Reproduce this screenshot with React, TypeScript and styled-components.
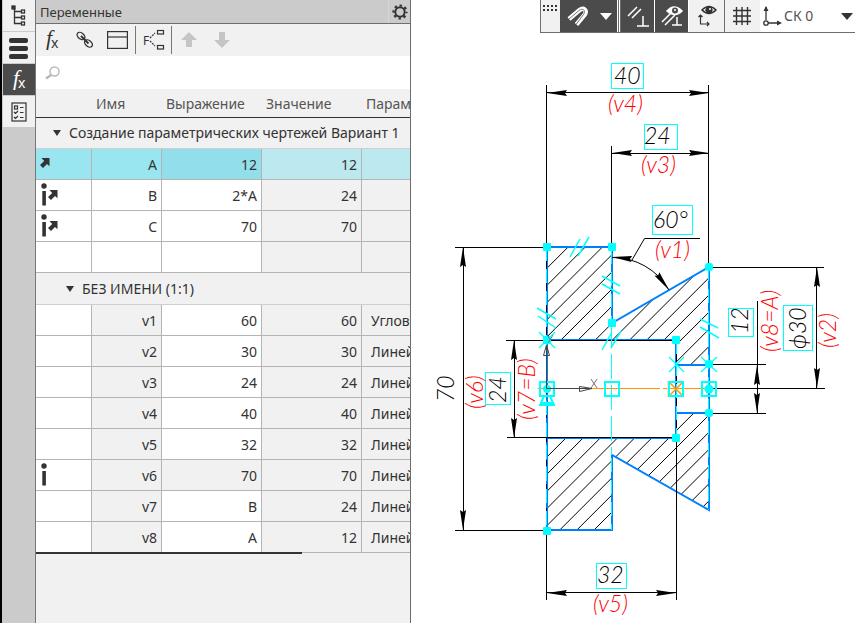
import React from "react";
import styled, { createGlobalStyle, css } from "styled-components";

const ink = "#333333";
const grey = "#cbcbcb";
const light = "#f1f1f1";
const cyan = "#00ffff";
const blue = "#0080ff";
const orange = "#ff9800";

const GlobalStyle = createGlobalStyle`
  * { box-sizing: border-box; }
  body { margin: 0; background: #fff; color: ${ink}; font: 14px/20px "Noto Sans", "Open Sans", sans-serif; }
  button, input, select { font: inherit; color: inherit; }
  svg { display: block; flex: none; }
`;

const Page = styled.div`
  display: grid;
  grid-template-columns: 36px minmax(0, 375fr) minmax(0, 444fr);
  min-height: 100vh;
`;

const Rail = styled.nav`
  display: flex;
  flex-direction: column;
  gap: 1px;
  background: ${grey};
  border-left: 2px solid #000;
  border-right: 1px solid #777;
  padding-left: 1px;
`;

const RailButton = styled.button<{ $active?: boolean }>`
  display: flex;
  align-items: center;
  justify-content: center;
  height: 31px;
  padding: 0;
  border: 0;
  background: ${(p) => (p.$active ? "#4b4b4b" : light)};
  color: ${(p) => (p.$active ? "#fff" : ink)};
`;

const Panel = styled.section`
  display: flex;
  flex-direction: column;
  background: ${light};
  border-right: 1px solid #6e6e6e;
  overflow: hidden;
`;

const TitleBar = styled.header`
  display: flex;
  align-items: center;
  justify-content: space-between;
  height: 24px;
  padding-left: 4px;
  background: ${grey};
  border-bottom: 1px solid #6e6e6e;
`;

const Title = styled.h1`
  margin: 0;
  font-size: 13px;
  line-height: 20px;
  font-weight: 400;
`;

const GearButton = styled.button`
  display: flex;
  align-items: center;
  justify-content: center;
  width: 22px;
  height: 23px;
  padding: 0;
  border: 0;
  border-left: 1px solid #d6d6d6;
  background: none;
`;

const Tools = styled.div`
  display: flex;
  align-items: center;
  height: 32px;
`;

const ToolButton = styled.button<{ $w?: number }>`
  display: flex;
  align-items: center;
  justify-content: center;
  width: ${(p) => p.$w ?? 33}px;
  height: 28px;
  padding: 0;
  border: 0;
  background: none;
  color: ${ink};
  &:disabled { color: #c5c5c5; }
`;

const Divider = styled.span`
  width: 1px;
  height: 28px;
  margin: 0 1px;
  background: #777;
`;

const Search = styled.label`
  display: flex;
  align-items: center;
  gap: 8px;
  height: 33px;
  padding-left: 9px;
  background: #fff;
`;

const SearchInput = styled.input`
  flex: 1;
  min-width: 0;
  border: 0;
  outline: 0;
  background: none;
`;

const Grid = styled.table`
  width: 100%;
  table-layout: fixed;
  border-collapse: separate;
  border-spacing: 0;
  white-space: nowrap;
`;

const Col = styled.col<{ $w?: number }>`
  width: ${(p) => (p.$w ? `${p.$w}px` : "auto")};
`;

const Head = styled.th`
  height: 29px;
  padding: 2px 0 0 4px;
  border-bottom: 1px solid ${ink};
  text-align: left;
  font-weight: 400;
  color: #555;
  overflow: hidden;
`;

const Group = styled.th<{ $indent: number }>`
  height: ${(p) => (p.$indent > 20 ? 32 : 31)}px;
  padding: 0 0 0 ${(p) => p.$indent}px;
  border-bottom: 1px solid #cfcfcf;
  text-align: left;
  font-weight: 400;
  overflow: hidden;
`;

const GroupToggle = styled.button`
  display: flex;
  align-items: center;
  gap: 8px;
  padding: 0;
  border: 0;
  background: none;
`;

const Cell = styled.td<{ $bg?: string; $kind?: "icon" | "text" }>`
  height: 31px;
  padding: 2px 4px 0 0;
  border-right: 1px solid #b4b4b4;
  border-bottom: 1px solid #b4b4b4;
  background: ${(p) => p.$bg ?? "#fff"};
  text-align: right;
  line-height: 20px;
  overflow: hidden;
  ${(p) => p.$kind === "icon" && css`padding: 0 0 0 4px; text-align: left;`}
  ${(p) => p.$kind === "text" && css`padding: 2px 0 0 9px; text-align: left; border-right: 0;`}
`;

const TableEnd = styled.div`
  width: 71%;
  height: 2px;
  margin-top: -1px;
  background: ${ink};
`;

const Work = styled.main`
  display: flex;
  flex-direction: column;
  background: #fff;
  min-width: 0;
`;

const SnapBar = styled.div`
  display: flex;
  align-self: flex-end;
  height: 33px;
  width: 315px;
  border-left: 1px solid #6e6e6e;
  border-bottom: 1px solid #6e6e6e;
`;

const Handle = styled.div`
  width: 19px;
  padding: 5px 0 0 2px;
  background: ${light};
`;

const SnapButton = styled.button<{ $w: number; $dark?: boolean; $line?: boolean }>`
  display: flex;
  align-items: center;
  justify-content: center;
  gap: 10px;
  width: ${(p) => p.$w}px;
  flex: none;
  padding: 0;
  border: 0;
  border-right: 1px solid ${(p) => (p.$dark ? "#fff" : p.$line ? "#6e6e6e" : light)};
  background: ${(p) => (p.$dark ? "#4b4b4b" : light)};
  color: ${(p) => (p.$dark ? "#fff" : ink)};
`;

const Gap = styled.span`
  width: 3px;
  border-left: 1px solid #6e6e6e;
  border-right: 1px solid #6e6e6e;
`;

const CsField = styled.label`
  display: flex;
  align-items: center;
  flex: 1;
  min-width: 0;
  padding: 0 2px;
`;

const CsSelect = styled.select`
  flex: 1;
  min-width: 0;
  appearance: none;
  border: 0;
  padding: 0 0 0 2px;
  background: none;
  color: #555;
  font-size: 14px;
`;

const Drawing = styled.svg`
  width: 100%;
  height: auto;
  font-family: Lato, "Open Sans", sans-serif;
  font-style: italic;
  font-weight: 300;
  font-size: 23px;
`;

const FxIcon = () => (
  <svg width="20" height="28" viewBox="0 0 20 28" fill="currentColor" overflow="visible">
    <text x="4" y="19" fontFamily="Liberation Serif, serif" fontStyle="italic" fontSize="22">f</text>
    <text x="9" y="22" fontFamily="Noto Sans, sans-serif" fontSize="14">x</text>
  </svg>
);

const TreeIcon = () => (
  <svg width="16" height="22" viewBox="0 0 16 22" fill="none" stroke="currentColor" strokeWidth="1.3">
    <path d="M3.5 3v15.500h7M3.500 6.500h7M3.500 12.500h7" />
    <rect x="1" y="1" width="3" height="3" fill="currentColor" />
    <rect x="10.500" y="5" width="3" height="3" /><rect x="10.500" y="11" width="3" height="3" /><rect x="10.500" y="17" width="3" height="3" />
  </svg>
);

const BarsIcon = () => (
  <svg width="20" height="22" viewBox="0 0 20 22" fill="currentColor">
    <rect x="0" y="1" width="19" height="5" rx="2" /><rect x="0" y="9" width="19" height="5" rx="2" /><rect x="0" y="17" width="19" height="5" rx="2" />
  </svg>
);

const ChecksIcon = () => (
  <svg width="16" height="20" viewBox="0 0 16 20" fill="none" stroke="currentColor" strokeWidth="1.2">
    <rect x="1" y="1" width="14" height="18" /><rect x="3.500" y="4" width="3" height="3" />
    <path d="M9 5.500h3.500M9 10.500h3.500M9 15.500h3.500M3 10l1.500 1.500L7 9M3 15l1.500 1.500L7 14" />
  </svg>
);

const LinkIcon = () => (
  <svg width="18" height="18" viewBox="0 0 18 18" fill="none" stroke="currentColor" strokeWidth="1.4">
    <ellipse cx="5" cy="5" rx="4.400" ry="3" transform="rotate(40 5 5)" />
    <ellipse cx="12.500" cy="12.500" rx="4.400" ry="3" transform="rotate(40 12.500 12.500)" />
    <path d="M5 5l7.500 7.500" strokeWidth="1.8" />
  </svg>
);

const WindowIcon = () => (
  <svg width="21" height="18" viewBox="0 0 21 18" fill="none" stroke="currentColor" strokeWidth="1.2">
    <rect x=".6" y=".6" width="19.800" height="16.800" /><path d="M1 6h19" />
  </svg>
);

const FormulaTreeIcon = () => (
  <svg width="22" height="22" viewBox="0 0 22 22" fill="none" stroke="currentColor" strokeWidth="1.200" overflow="visible">
    <text x="0" y="15.500" fontSize="12" fontFamily="Noto Sans, sans-serif" fill="currentColor" stroke="none">F</text>
    <path d="M7 9l5-5M7 12l5 5" strokeDasharray="2 1" />
    <rect x="14.500" y="1.500" width="6" height="3.500" /><rect x="14.500" y="16.500" width="6" height="3.500" />
  </svg>
);

const ArrowIcon = ({ down }: { down?: boolean }) => (
  <svg width="16" height="16" viewBox="0 0 16 16" fill="currentColor">
    <path d={down ? "M5 0h6v8h5l-8 8-8-8h5z" : "M8 0l8 8h-5v7H5V8H0z"} />
  </svg>
);

const GearIcon = () => (
  <svg width="16" height="16" viewBox="0 0 16 16" fill="none" stroke={ink}>
    <circle cx="8" cy="8" r="4.700" strokeWidth="2" />
    <circle cx="8" cy="8" r="6.500" strokeWidth="2.200" strokeDasharray="2.400 2.705" strokeDashoffset="1.200" />
  </svg>
);

const SearchIcon = () => (
  <svg width="16" height="14" viewBox="0 0 16 14" fill="none" stroke="#b9b9b9">
    <circle cx="9.500" cy="5.500" r="4.500" strokeWidth="1.500" /><path d="M6 9l-5 3.500" strokeWidth="2.500" />
  </svg>
);

const Caret = ({ w = 8 }: { w?: number }) => (
  <svg width={w} height={w === 8 ? 6 : 7} viewBox="0 0 12 8" preserveAspectRatio="none" fill="currentColor"><path d="M0 0h12L6 8z" /></svg>
);

const MarkIcon = ({ info, link }: { info?: boolean; link?: boolean }) => (
  <svg width="20" height="26" viewBox="0 0 20 26" fill={ink}>
    {info && <><circle cx="4" cy="4" r="2.700" /><path d="M2.300 9h3.600v14.500H2.300z" /></>}
    {link && <path transform={info ? "translate(8 8)" : "translate(0 7)"} d="M1.500 0H9.500v8.200L7 6 3 10 0 7l4.200-4z" />}
  </svg>
);

const MagnetIcon = () => (
  <svg width="24" height="24" viewBox="0 0 24 24" fill="none">
    <path d="M3 15L13 6.500c5-4 8.500 0 5.500 4.500l-8 9.500" stroke="#fff" strokeWidth="4.500" />
    <path d="M3 15L13 6.500c4-3 7 0 4.500 4l-7.500 10" stroke="#777" strokeWidth="1" />
  </svg>
);

const Perp = ({ eye }: { eye?: boolean }) => (
  <svg width="24" height="24" viewBox="0 0 24 24" fill="none" stroke="currentColor" strokeWidth="1.500">
    <path d={eye ? "M2 18L13 7M5 21L15 11M12 21h10M17 13v8" : "M2 12L11 3M6 14L15 5M11 22h12M17 12v10"} />
    {eye && <><path d="M7 7q7-8 15 0q-7 7-15 0z" fill="currentColor" /><circle cx="15" cy="6.500" r="3" fill="#4b4b4b" stroke="none" /><circle cx="15" cy="6" r="1" fill="#fff" stroke="none" /></>}
  </svg>
);

const EyeAxes = () => (
  <svg width="24" height="24" viewBox="0 0 24 24" fill="none" stroke="currentColor">
    <path d="M7 6q7-7 14 0q-7 7-14 0z" strokeWidth="1.500" /><circle cx="14" cy="6" r="3.200" fill="currentColor" /><circle cx="15" cy="5" r="1" fill="#fff" stroke="none" />
    <path d="M5.500 12v8h8M3.500 13l2-2 2 2M12 18l2 2-2 2" strokeWidth="1.200" />
  </svg>
);

const GridIcon = () => (
  <svg width="20" height="20" viewBox="0 0 20 20" stroke="currentColor" strokeWidth="1.400"><path d="M4.500 1v18M10 1v18M15.500 1v18M1 4.500h18M1 10h18M1 15.500h18" /></svg>
);

const AxesIcon = () => (
  <svg width="20" height="22" viewBox="0 0 20 22" fill="none" stroke={ink} strokeWidth="1.300">
    <path d="M4 2v13M6 18h12" /><circle cx="4" cy="18" r="2.200" /><path d="M1.500 6L4 1l2.500 5zM15 15.500l5 2.500-5 2.500z" fill={ink} stroke="none" />
  </svg>
);

interface Row { name: string; expr: string; value: string; type: string; info?: boolean; link?: boolean; selected?: boolean; locked?: boolean }

const userRows: Row[] = [
  { name: "A", expr: "12", value: "12", type: "", link: true, selected: true },
  { name: "B", expr: "2*A", value: "24", type: "", info: true, link: true },
  { name: "C", expr: "70", value: "70", type: "", info: true, link: true },
  { name: "", expr: "", value: "", type: "" },
];

const sizeRows: Row[] = [
  { name: "v1", expr: "60", value: "60", type: "Угловой размер" },
  { name: "v2", expr: "30", value: "30", type: "Линейный размер" },
  { name: "v3", expr: "24", value: "24", type: "Линейный размер" },
  { name: "v4", expr: "40", value: "40", type: "Линейный размер" },
  { name: "v5", expr: "32", value: "32", type: "Линейный размер" },
  { name: "v6", expr: "70", value: "70", type: "Линейный размер", info: true, locked: true },
  { name: "v7", expr: "B", value: "24", type: "Линейный размер" },
  { name: "v8", expr: "A", value: "12", type: "Линейный размер" },
];

const VariableRow = ({ row, fixedName }: { row: Row; fixedName?: boolean }) => {
  const s = row.selected;
  return (
    <tr aria-selected={s}>
      <Cell $kind="icon" $bg={s ? "#99e6f1" : "#fff"}><MarkIcon info={row.info} link={row.link} /></Cell>
      <Cell $bg={s ? "#99e6f1" : fixedName ? light : "#fff"}>{row.name}</Cell>
      <Cell $bg={s ? "#92deea" : row.locked ? light : "#fff"}>{row.expr}</Cell>
      <Cell $bg={s ? "#bce8ef" : light}>{row.value}</Cell>
      <Cell $kind="text" $bg={s ? "#bce8ef" : light}>{row.type}</Cell>
    </tr>
  );
};

const Arrow = ({ x, y, a }: { x: number; y: number; a: number }) => (
  <path d="M0 0L20-3L18 0L20 3z" fill="#000" transform={`translate(${x} ${y}) rotate(${a})`} />
);

const Note = ({ x, y, t, red, up }: { x: number; y: number; t: string; red?: boolean; up?: boolean }) => (
  <text fill={red ? "#ff0000" : "#000"} transform={`translate(${x} ${y}) rotate(${up ? -90 : 0})`}>{t}</text>
);

const hatch = Array.from({ length: 25 }, (_, i) => 798 + i * 17.16);
const nodes = [[547, 247], [612, 247], [612, 323], [547, 340], [676, 340], [676, 438], [547, 531], [709, 267], [709, 364], [709, 413]];
const frames = [[547, 389], [612, 389], [676, 389], [709, 389]];
const boxes = [[611, 63, 32, 25], [644, 124, 33, 25], [652, 205, 40, 29], [596, 563, 30, 25], [485, 372, 25, 32], [728, 308, 25, 28], [783, 305, 29, 45]];
const arrows = [[547, 93, 0], [709, 93, 180], [612, 153, 0], [709, 153, 180], [547, 593, 0], [676, 593, 180], [463, 247, 90], [463, 530, -90], [514, 340, 90], [514, 438, -90], [757, 365, 90], [757, 413, -90], [817, 267, 90], [817, 388, -90], [612, 257, 6], [669, 290, 233]];

const PartDrawing = () => (
  <Drawing viewBox="411 33 444 590" role="img" aria-label="Чертёж детали">
    <clipPath id="solid">
      <path d="M547 247H612V323L709 267V365H676V340H547zM547 438H676V413H709V510L612 455V530H547z" />
    </clipPath>
    <g clipPath="url(#solid)" stroke="#000" strokeWidth="1">
      {hatch.map((c) => <path key={c} d={`M547 ${c - 547}L709 ${c - 709}`} />)}
    </g>
    <g fill="none" stroke={blue} strokeWidth="2">
      <path d="M547 247H612V323L709 267V510L612 455V530H547zM547 340H676V438H547M676 365H709M676 413H709" />
    </g>
    <g fill="none" stroke="#000" strokeWidth="1">
      <path d="M546.500 85V340M546.500 530V600M708.500 85V267M611.500 146V247M546.500 92.500H709M611.500 153.500H709" />
      <path d="M455 247.500H547M455 530.500H547M463.500 247V530M506 340.500H676M507 437.500H676M514.500 340V438" />
      <path d="M676.500 340V600M546.500 592.500H676M709 267.500H824M709 364.500H766M709 388.500H825M709 413.500H766" />
      <path d="M757.500 301V413M816.500 267V388M632 260L644.500 238.500H700M612 257.500A65 65 0 0 1 669 290" />
      <path d="M546.500 340V530" strokeDasharray="6 18" />
    </g>
    <g fill="none" stroke={cyan}>
      <path d="M546.500 247V530M611.500 250V323M708.500 267V510M611.500 458V530M676.500 340V438" strokeDasharray="14 8" />
      <path d="M611.500 323V455" strokeDasharray="25 6" />
      <path strokeWidth="1.500" d="M570 257L580 239M578 256L589 237M602 276L620 286M602 284L620 294M537 308L556 319M538 316L556 328M602 350L612 332M611 348L621 331M700 319L718 328M700 327L719 338" />
      <path strokeWidth="1.300" d="M539 332L555 348M539 348L555 332M669 357L684 372M669 372L684 357M701 357L717 372M701 372L717 357" />
      {boxes.map(([x, y, w, h]) => <rect key={`${x}-${y}`} x={x + 0.5} y={y + 0.5} width={w} height={h} />)}
    </g>
    <path d="M538 388.500H709" stroke={orange} strokeDasharray="122 3 4 3" />
    <path d="M670 383L682 395M670 395L682 383M668.500 381V397" stroke={orange} strokeWidth="1.500" />
    <g fill="none" stroke={cyan} strokeWidth="2">
      {frames.map(([x, y]) => <rect key={x} x={x - 7} y={y - 7} width="14" height="14" />)}
      <path d="M544 396L541 403H553L550 396M539 405H555" />
    </g>
    <g fill={cyan}>
      {nodes.map(([x, y]) => <rect key={`${x}-${y}`} x={x - 4} y={y - 4} width="8" height="8" rx={x === 709 ? 3 : 1} />)}
      <circle cx="709" cy="389" r="4.500" /><circle cx="547" cy="389" r="4" />
    </g>
    <g fill="none" stroke="#444">
      <path d="M546.500 388.500V345M546.500 388.500H592M543.500 355.500L546.500 345L549.500 355.500zM579.500 386.500L592 388.500L579.500 391.500z" />
      <path d="M591 379L597 388M597 379L591 388M548 336L550 340L553 335M550 340L548 343" stroke="#777" />
    </g>
    {arrows.map(([x, y, a]) => <Arrow key={`${x}-${y}`} x={x} y={y} a={a} />)}
    <Note x={614} y={84} t="40" /><Note x={608} y={112} t="(v4)" red />
    <Note x={644} y={144} t="24" /><Note x={641} y={173} t="(v3)" red />
    <Note x={653} y={228} t="60°" /><Note x={655} y={258} t="(v1)" red />
    <Note x={597} y={583} t="32" /><Note x={593} y={612} t="(v5)" red />
    <Note x={454} y={402} t="70" up /><Note x={483} y={409} t="(v6)" red up />
    <Note x={506} y={403} t="24" up /><Note x={535} y={420} t="(v7=B)" red up />
    <Note x={748} y={334} t="12" up /><Note x={778} y={352} t="(v8=A)" red up />
    <Note x={806} y={349} t="ϕ30" up /><Note x={836} y={348} t="(v2)" red up />
  </Drawing>
);

export default function App() {
  return (
    <>
      <GlobalStyle />
      <Page>
        <Rail aria-label="Панели">
          <RailButton aria-label="Дерево"><TreeIcon /></RailButton>
          <RailButton aria-label="Слои"><BarsIcon /></RailButton>
          <RailButton aria-label="Переменные" $active><FxIcon /></RailButton>
          <RailButton aria-label="Параметры"><ChecksIcon /></RailButton>
        </Rail>
        <Panel>
          <TitleBar>
            <Title>Переменные</Title>
            <GearButton aria-label="Настройка"><GearIcon /></GearButton>
          </TitleBar>
          <Tools>
            <ToolButton $w={32} aria-label="Функция"><FxIcon /></ToolButton>
            <ToolButton aria-label="Ссылка"><LinkIcon /></ToolButton>
            <ToolButton aria-label="Таблица"><WindowIcon /></ToolButton>
            <Divider />
            <ToolButton aria-label="Структура формул"><FormulaTreeIcon /></ToolButton>
            <Divider />
            <ToolButton $w={32} aria-label="Вверх" disabled><ArrowIcon /></ToolButton>
            <ToolButton aria-label="Вниз" disabled><ArrowIcon down /></ToolButton>
          </Tools>
          <Search>
            <SearchIcon />
            <SearchInput type="search" aria-label="Поиск" />
          </Search>
          <Grid>
            <colgroup><Col $w={56} /><Col $w={70} /><Col $w={100} /><Col $w={100} /><Col /></colgroup>
            <thead>
              <tr><Head /><Head>Имя</Head><Head>Выражение</Head><Head>Значение</Head><Head>Параметр</Head></tr>
            </thead>
            <tbody>
              <tr><Group colSpan={5} $indent={17}><GroupToggle><Caret />Создание параметрических чертежей Вариант 1</GroupToggle></Group></tr>
              {userRows.map((r, i) => <VariableRow key={i} row={r} />)}
            </tbody>
            <tbody>
              <tr><Group colSpan={5} $indent={30}><GroupToggle><Caret />БЕЗ ИМЕНИ (1:1)</GroupToggle></Group></tr>
              {sizeRows.map((r) => <VariableRow key={r.name} row={r} fixedName />)}
            </tbody>
          </Grid>
          <TableEnd />
        </Panel>
        <Work>
          <SnapBar>
            <Handle>
              <svg width="16" height="7" viewBox="0 0 16 7" stroke={ink} strokeWidth="2" strokeDasharray="2 2"><path d="M0 1h14M0 5h14" /></svg>
            </Handle>
            <SnapButton $w={58} $dark aria-label="Привязки"><MagnetIcon /><Caret w={12} /></SnapButton>
            <Gap />
            <SnapButton $w={34} $dark aria-label="Ограничения"><Perp /></SnapButton>
            <SnapButton $w={34} $dark aria-label="Показать ограничения"><Perp eye /></SnapButton>
            <SnapButton $w={36} $line aria-label="Показать оси"><EyeAxes /></SnapButton>
            <SnapButton $w={35} aria-label="Сетка"><GridIcon /></SnapButton>
            <CsField>
              <AxesIcon />
              <CsSelect aria-label="Система координат"><option>СК 0</option></CsSelect>
              <Caret w={12} />
            </CsField>
          </SnapBar>
          <PartDrawing />
        </Work>
      </Page>
    </>
  );
}
